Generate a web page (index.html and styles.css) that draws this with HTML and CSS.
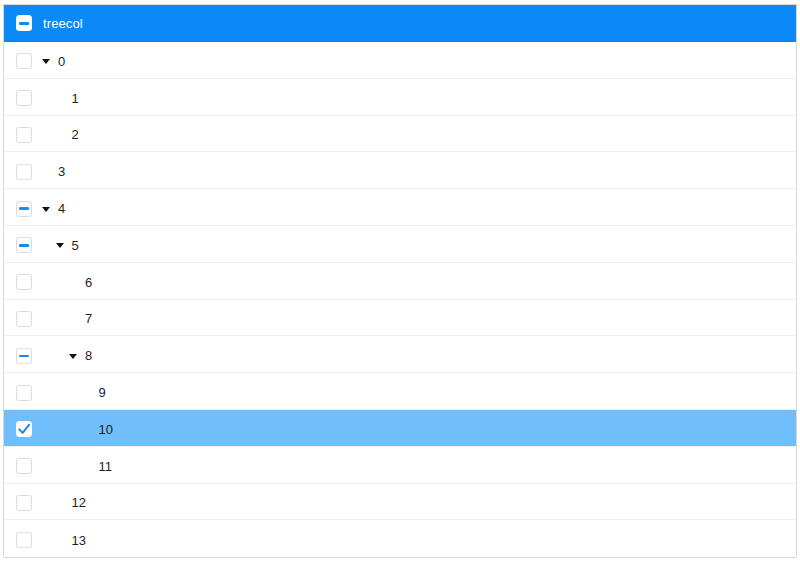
FILE: index.html
```html
<!DOCTYPE html>
<html>
<head>
<meta charset="utf-8" />
<title>Tree</title>
<link rel="stylesheet" href="styles.css">
</head>
<body>
	<div class="tree">
		<div class="tree-head">
			<span class="cb cb-head"><i></i></span>
			<span class="head-label">treecol</span>
		</div>
		<div class="tree-row"><span class="cb"></span><span class="node lv0"><span class="caret"></span>0</span></div>
		<div class="tree-row"><span class="cb"></span><span class="node lv1"><span class="leaf"></span>1</span></div>
		<div class="tree-row"><span class="cb"></span><span class="node lv1"><span class="leaf"></span>2</span></div>
		<div class="tree-row"><span class="cb"></span><span class="node lv0"><span class="leaf"></span>3</span></div>
		<div class="tree-row"><span class="cb cb-part"><i></i></span><span class="node lv0"><span class="caret"></span>4</span></div>
		<div class="tree-row"><span class="cb cb-part"><i></i></span><span class="node lv1"><span class="caret"></span>5</span></div>
		<div class="tree-row"><span class="cb"></span><span class="node lv2"><span class="leaf"></span>6</span></div>
		<div class="tree-row"><span class="cb"></span><span class="node lv2"><span class="leaf"></span>7</span></div>
		<div class="tree-row"><span class="cb cb-part"><i></i></span><span class="node lv2"><span class="caret"></span>8</span></div>
		<div class="tree-row"><span class="cb"></span><span class="node lv3"><span class="leaf"></span>9</span></div>
		<div class="tree-row selected"><span class="cb cb-on"><svg width="14" height="14" viewBox="0 0 14 14"><path d="M2.2 7.4 L5.6 10.8 L12 2.8" fill="none" stroke="#1a8af2" stroke-width="2" stroke-linecap="round" stroke-linejoin="round"/></svg></span><span class="node lv3"><span class="leaf"></span>10</span></div>
		<div class="tree-row"><span class="cb"></span><span class="node lv3"><span class="leaf"></span>11</span></div>
		<div class="tree-row"><span class="cb"></span><span class="node lv1"><span class="leaf"></span>12</span></div>
		<div class="tree-row"><span class="cb"></span><span class="node lv1"><span class="leaf"></span>13</span></div>
	</div>
</body>
</html>
```

FILE: styles.css
```css
* {
	margin: 0;
	padding: 0;
	box-sizing: border-box;
}
html,body {
	width: 100%;
	height: 100%;
	background: #fff;
}
body {
	padding: 4px 4px 0 3px;
	font-family: "Helvetica Neue", "Liberation Sans", Arial, sans-serif;
	font-size: 13px;
	color: #1e1e1e;
}
.tree {
	width: 794px;
	border: 1px solid #d9d9d9;
}
.tree-head {
	display: flex;
	align-items: center;
	height: 37px;
	padding-left: 12px;
	background: #0a89f7;
	border-bottom: 1px solid #0a7fe6;
	color: #fff;
}
.head-label {
	margin-left: 11px;
	font-weight: 500;
	letter-spacing: 0.1px;
}
.tree-row {
	display: flex;
	align-items: center;
	height: 36.8px;
	padding: 3px 0 0 12px;
	border-bottom: 1px solid #efefef;
}
.tree-row:last-child {
	border-bottom: none;
}
.tree-row.selected {
	background: #70bffc;
}
.cb {
	display: flex;
	align-items: center;
	justify-content: center;
	width: 16px;
	height: 16px;
	flex: none;
	border: 1px solid #dcdcdc;
	border-radius: 3px;
	background: #fff;
}
.cb i {
	display: block;
	width: 10px;
	height: 2.5px;
	border-radius: 1px;
	background: #1a8af2;
}
.cb-head {
	border: none;
	border-radius: 3.5px;
}
.cb-head i {
	background: #0a89f7;
	height: 3px;
}
.cb-on {
	border-color: #fff;
}
.node {
	display: flex;
	align-items: center;
}
.lv0 { margin-left: 10px; }
.lv1 { margin-left: 23.5px; }
.lv2 { margin-left: 37px; }
.lv3 { margin-left: 50.5px; }
.caret {
	width: 0;
	height: 0;
	margin-right: 8px;
	margin-top: 1px;
	border-left: 4.5px solid transparent;
	border-right: 4.5px solid transparent;
	border-top: 5px solid #111;
}
.leaf {
	width: 16px;
}
```
